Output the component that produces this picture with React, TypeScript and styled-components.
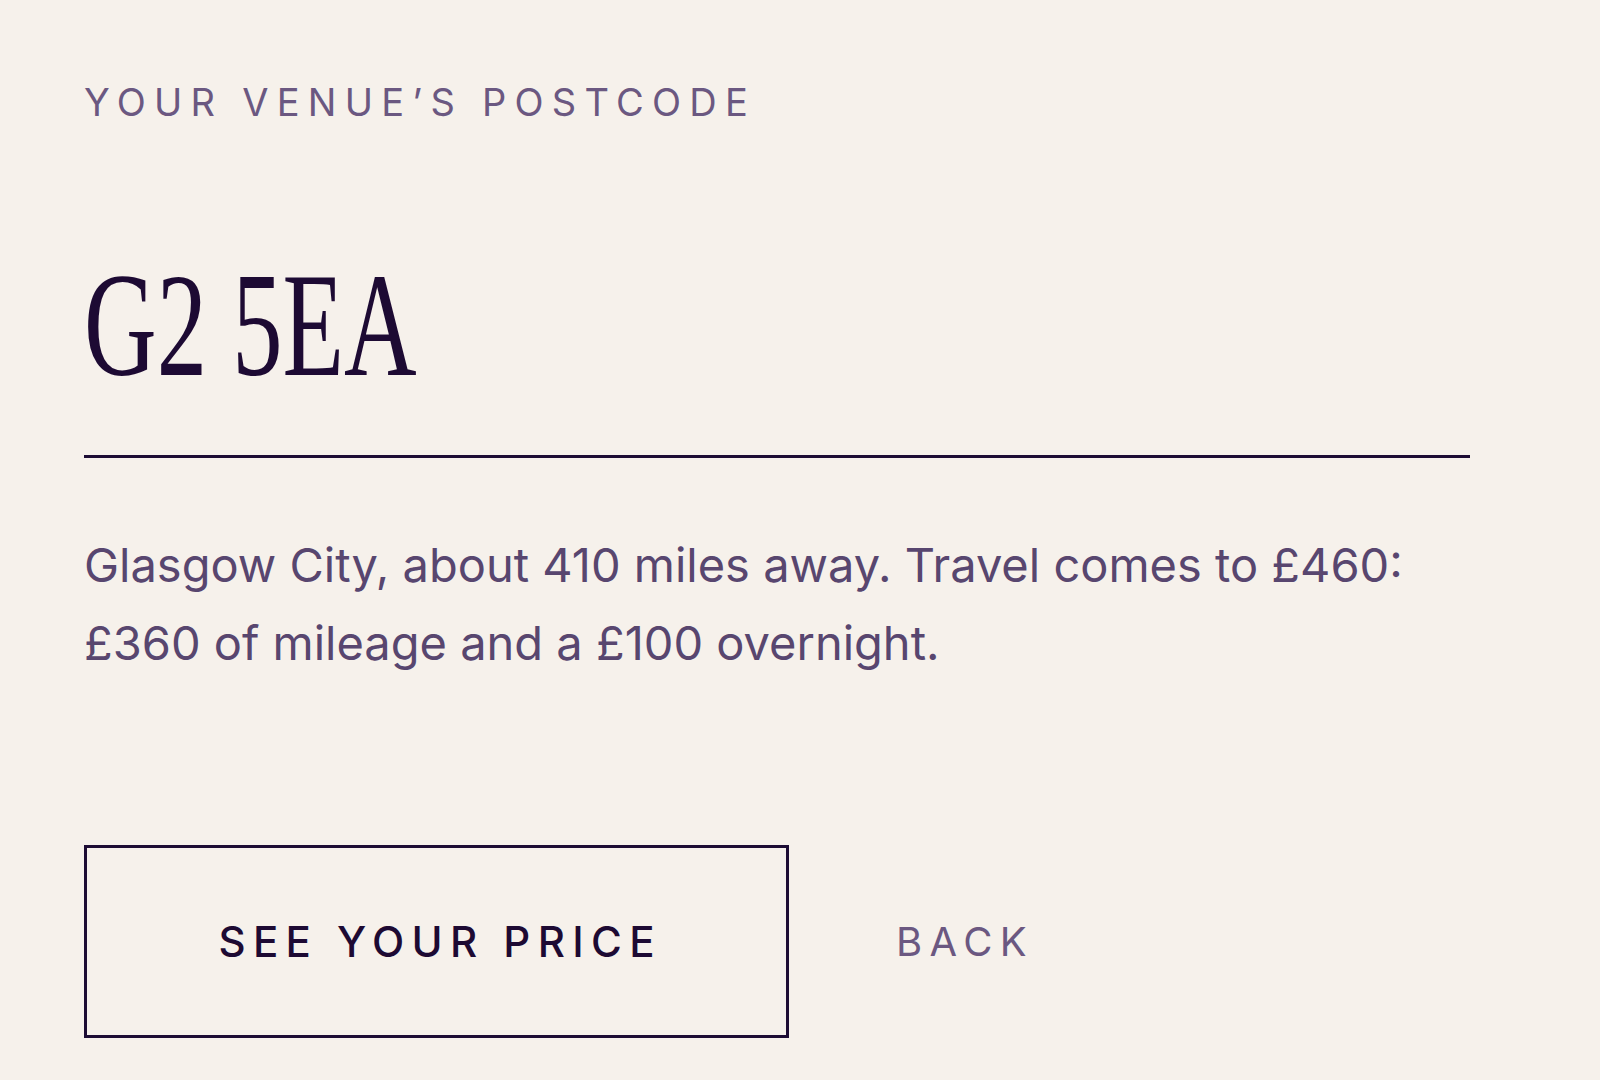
import styled, { createGlobalStyle } from 'styled-components';

const GlobalStyle = createGlobalStyle`
  html,
  body {
    margin: 0;
    padding: 0;
    background: #f6f1eb;
  }

  body {
    font-family: Inter, 'Noto Sans', sans-serif;
    -webkit-font-smoothing: antialiased;
  }
`;

const Page = styled.main`
  min-height: 100vh;
  box-sizing: border-box;
  padding: 83px 0 0 84px;
`;

const Step = styled.section`
  width: 1386px;
  display: flex;
  flex-direction: column;
`;

const FieldLabel = styled.label`
  display: block;
  font-size: 38px;
  line-height: 1;
  letter-spacing: 0.217em;
  text-transform: uppercase;
  color: #6b5881;
`;

const PostcodeWrap = styled.div`
  margin-top: 130px;
  height: 148px;
  padding-bottom: 56px;
  border-bottom: 3px solid #1d0c34;
`;

const Postcode = styled.div`
  display: inline-block;
  font-family: 'Liberation Serif', 'Times New Roman', serif;
  font-size: 148px;
  line-height: 1;
  color: #1d0a33;
  transform: scaleX(0.68);
  transform-origin: left center;
  white-space: nowrap;
`;

const Summary = styled.p`
  margin: 68px 0 0;
  font-size: 47px;
  line-height: 78px;
  color: #58466f;
  max-width: 1340px;
`;

const Actions = styled.div`
  margin-top: 163px;
  display: flex;
  align-items: center;
  column-gap: 107px;
`;

const Button = styled.button<{ $variant?: 'outline' | 'text' }>`
  box-sizing: border-box;
  display: flex;
  align-items: center;
  justify-content: center;
  margin: 0;
  font-family: inherit;
  text-transform: uppercase;
  cursor: pointer;
  background: transparent;

  ${({ $variant }) =>
    $variant === 'text'
      ? `
    border: 0;
    padding: 0;
    font-size: 40px;
    letter-spacing: 0.185em;
    color: #6b5881;
  `
      : `
    width: 705px;
    height: 193px;
    border: 3px solid #1d0c34;
    padding: 0 0 0 0.176em;
    font-size: 42px;
    font-weight: 500;
    letter-spacing: 0.176em;
    color: #1d0a33;
  `}
`;

export default function App() {
  return (
    <>
      <GlobalStyle />
      <Page>
        <Step>
          <FieldLabel htmlFor="postcode">Your venue’s postcode</FieldLabel>
          <PostcodeWrap>
            <Postcode id="postcode">G2 5EA</Postcode>
          </PostcodeWrap>
          <Summary>
            Glasgow City, about 410 miles away. Travel comes to £460: £360 of mileage and a £100 overnight.
          </Summary>
          <Actions>
            <Button type="button">See your price</Button>
            <Button type="button" $variant="text">
              Back
            </Button>
          </Actions>
        </Step>
      </Page>
    </>
  );
}
